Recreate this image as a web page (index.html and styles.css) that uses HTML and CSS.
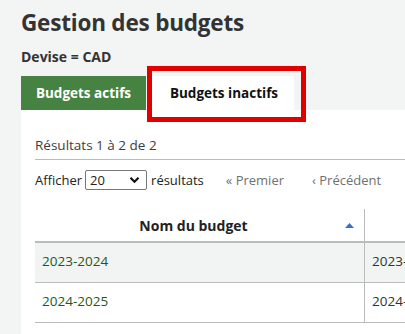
FILE: index.html
```html
<!DOCTYPE html>
<html lang="fr">
<head>
<meta charset="utf-8">
<title>Gestion des budgets</title>
<link rel="stylesheet" href="styles.css">
</head>
<body>
<div class="page">
  <h1 class="title">Gestion des budgets</h1>
  <div class="currency">Devise = CAD</div>
  <div class="tabs">
    <div class="tab tab-green">Budgets actifs</div>
    <div class="tab tab-current">Budgets inactifs<span class="highlight"></span></div>
  </div>
  <div class="panel">
    <div class="results">Résultats 1 à 2 de 2</div>
    <div class="controls">
      <span class="lbl">Afficher</span>
      <span class="select-wrap">
        <select class="select"><option>20</option></select>
        <svg class="chev" width="11" height="8" viewBox="0 0 11 8"><path d="M1.5 1.8 L5.5 5.8 L9.5 1.8" fill="none" stroke="#111" stroke-width="2.2"/></svg>
      </span>
      <span class="lbl">résultats</span>
      <span class="nav nav-first">« Premier</span>
      <span class="nav nav-prev">‹ Précédent</span>
    </div>
    <table class="grid">
      <thead>
        <tr>
          <th class="c1">Nom du budget<svg class="sort" width="9" height="5" viewBox="0 0 9 5"><path d="M0 5 L4.5 0 L9 5 Z" fill="#3b6fc4"/></svg></th>
          <th class="c2"></th>
        </tr>
      </thead>
      <tbody>
        <tr class="odd"><td class="c1 name">2023-2024</td><td class="c2">2023-2024</td></tr>
        <tr><td class="c1 name">2024-2025</td><td class="c2">2024-2025</td></tr>
      </tbody>
    </table>
  </div>
</div>
</body>
</html>
```
FILE: styles.css
```css
html, body {
  margin: 0;
  padding: 0;
  height: 100%;
  overflow: hidden;
}
body {
  background: #f3f4f4;
  font-family: "Open Sans", "Noto Sans", sans-serif;
  color: #333;
}
.page {
  padding-left: 21px;
}
.title {
  margin: 0;
  padding-top: 7px;
  font-size: 22.5px;
  line-height: 32px;
  font-weight: 700;
  color: #333;
  letter-spacing: -0.2px;
}
.currency {
  margin-top: 8px;
  font-size: 14px;
  line-height: 19px;
  font-weight: 700;
  color: #333;
}
.tabs {
  display: flex;
  margin-top: 10px;
  height: 34px;
}
.tab {
  box-sizing: border-box;
  height: 34px;
  display: flex;
  align-items: center;
  justify-content: center;
  font-size: 13.5px;
  font-weight: 700;
}
.tab-green {
  width: 125px;
  background: #468343;
  color: #fff;
}
.tab-current {
  margin-left: 4px;
  width: 144px;
  padding-left: 4px;
  background: #fff;
  color: #111;
  position: relative;
}
.highlight {
  position: absolute;
  left: -3px;
  top: -10px;
  width: 159px;
  height: 56px;
  box-sizing: border-box;
  border: 5px solid #e00000;
}
.panel {
  background: #fff;
  height: 240px;
  padding: 26px 0 0 14px;
  box-sizing: border-box;
}
.results {
  font-size: 13.5px;
  line-height: 18px;
  color: #3d3d3d;
  padding-bottom: 5px;
  border-bottom: 1px solid #bbb;
}
.controls {
  display: flex;
  align-items: center;
  height: 20px;
  margin-top: 10px;
  font-size: 13px;
  color: #222;
}
.lbl {
  line-height: 20px;
}
.select-wrap {
  position: relative;
  margin: 0 4px 0 3px;
  width: 62px;
  height: 20px;
}
.select {
  appearance: none;
  -webkit-appearance: none;
  box-sizing: border-box;
  width: 62px;
  height: 20px;
  border: 1px solid #767676;
  border-radius: 2px;
  background: #fff;
  font-family: "Open Sans", "Noto Sans", sans-serif;
  font-size: 13px;
  color: #222;
  padding: 0 0 0 4px;
  margin: 0;
}
.chev {
  position: absolute;
  right: 7px;
  top: 6px;
  pointer-events: none;
}
.nav {
  color: #707070;
}
.nav-first {
  margin-left: 22px;
}
.nav-prev {
  margin-left: 28px;
}
.grid {
  margin-top: 19px;
  border-collapse: collapse;
  width: 500px;
  font-size: 13.5px;
  table-layout: fixed;
}
.grid th {
  height: 32px;
  padding: 0 12px 0 0;
  font-size: 14px;
  font-weight: 700;
  color: #222;
  border-bottom: 2px solid #bbb;
  position: relative;
}
.grid th.c1 {
  width: 317px;
  border-right: 1px solid #bbb;
}
.grid td {
  height: 36px;
  padding: 0 0 3px 7px;
  border-bottom: 1px solid #bbb;
  color: #333;
  white-space: nowrap;
  overflow: hidden;
}
.grid td.c1 {
  border-right: 1px solid #bbb;
}
.grid td.name {
  color: #1c5a1c;
}
.grid tr.odd td {
  background: #f2f3f3;
}
.sort {
  position: absolute;
  right: 10px;
  top: 14px;
}
```
